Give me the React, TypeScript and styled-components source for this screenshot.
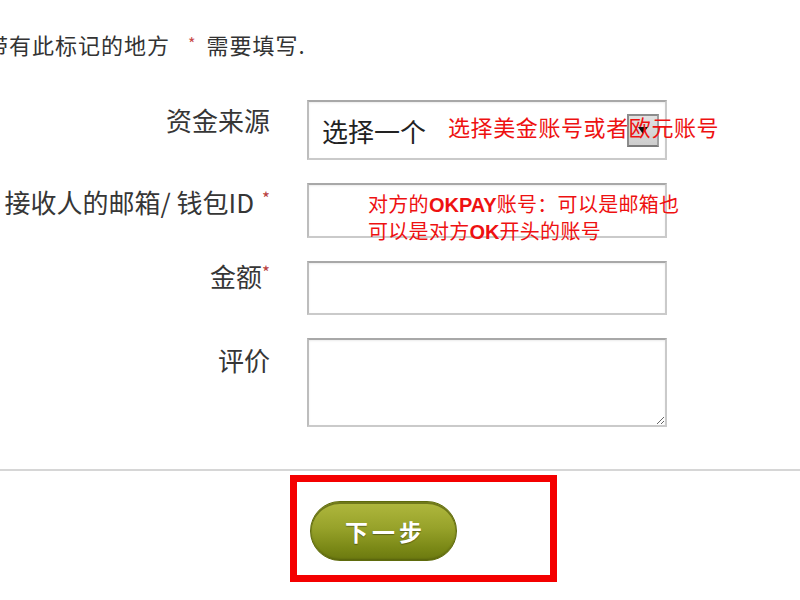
import React from 'react'
import styled, { createGlobalStyle } from 'styled-components'

const GlobalStyle = createGlobalStyle`
  html, body {
    margin: 0;
    padding: 0;
    background: #ffffff;
  }
  body {
    font-family: "Noto Sans CJK SC", "Noto Sans", sans-serif;
    color: #3a3a3a;
    overflow: hidden;
  }
`

const Page = styled.div`
  width: 800px;
  height: 600px;
  overflow: hidden;
`

const Notice = styled.div`
  padding-top: 28px;
  margin-left: -14px;
  height: 100px;
  box-sizing: border-box;
  font-size: 22px;
  letter-spacing: 1px;
  line-height: 30px;
  color: #333333;
  white-space: nowrap;
`

const NoticeStar = styled.span`
  display: inline-block;
  color: #c84a4a;
  font-size: 16px;
  vertical-align: 4px;
  margin: 0 10px 0 18px;
`

const Form = styled.div`
  display: grid;
  grid-template-columns: 270px 360px;
  grid-auto-rows: auto;
  column-gap: 37px;
  row-gap: 23px;
`

const Label = styled.div<{ $top: number }>`
  display: flex;
  justify-content: flex-end;
  align-items: flex-start;
  padding-top: ${(p) => p.$top}px;
  font-size: 26px;
  line-height: 30px;
  color: #363636;
  white-space: nowrap;
  min-width: 0;
`

const LabelStar = styled.span<{ $gap: number }>`
  color: #b84040;
  font-size: 17px;
  line-height: 17px;
  margin-left: ${(p) => p.$gap}px;
  margin-top: 2px;
`

const Field = styled.div`
  position: relative;
`

const boxBorder = `
  border: 2px solid #cacaca;
  border-top-color: #a8a8a8;
  border-left-color: #bdbdbd;
  box-shadow: inset 0 1px 2px rgba(0, 0, 0, 0.08);
  box-sizing: border-box;
  background: #ffffff;
`

const SelectBox = styled.div`
  ${boxBorder}
  height: 60px;
  display: flex;
  align-items: center;
  justify-content: space-between;
  padding: 0 6px 0 13px;
  font-size: 26px;
  color: #222222;
`

const DropButton = styled.span`
  width: 32px;
  height: 33px;
  box-sizing: border-box;
  border: 2px solid #8c8c8c;
  border-right-color: #a0a0a0;
  border-bottom-color: #7a7a7a;
  background: linear-gradient(#e2e2e2, #cdcdcd);
  display: flex;
  align-items: center;
  justify-content: center;
`

const TextInput = styled.input<{ $h: number }>`
  ${boxBorder}
  display: block;
  width: 100%;
  height: ${(p) => p.$h}px;
  margin: 0;
  outline: none;
`

const TextArea = styled.textarea`
  ${boxBorder}
  display: block;
  width: 100%;
  height: 89px;
  margin: 0;
  outline: none;
  resize: both;
`

const Annotation = styled.div<{ $left: number; $top: number; $size: number; $lh: number; $ls: number }>`
  position: absolute;
  left: ${(p) => p.$left}px;
  top: ${(p) => p.$top}px;
  font-size: ${(p) => p.$size}px;
  line-height: ${(p) => p.$lh}px;
  letter-spacing: ${(p) => p.$ls}px;
  color: #ee1111;
  white-space: nowrap;
  pointer-events: none;

  b {
    font-family: "Liberation Sans", Arial, sans-serif;
    font-weight: 700;
    letter-spacing: 0;
  }
`

const Divider = styled.div`
  margin-top: 42px;
  height: 2px;
  background: #d6d6d6;
`

const ActionArea = styled.div`
  margin: 4px 0 0 290px;
  width: 267px;
  height: 107px;
  box-sizing: border-box;
  border: 7px solid #f40000;
  padding: 19px 0 0 13px;
`

const NextButton = styled.button`
  width: 147px;
  height: 60px;
  border-radius: 30px;
  border: 1px solid #5f6b0c;
  background: linear-gradient(#b0b83e 0%, #97a22a 45%, #7a8816 80%, #6b7910 100%);
  box-shadow: inset 0 2px 0 rgba(60, 70, 0, 0.55), inset 0 -1px 2px rgba(0, 0, 0, 0.2);
  color: #ffffff;
  font-family: "Noto Sans CJK SC", sans-serif;
  font-size: 23px;
  font-weight: 700;
  letter-spacing: 4px;
  padding: 0 0 0 4px;
  text-shadow: 0 1px 1px rgba(0, 0, 0, 0.35);
  cursor: pointer;
`

export default function App() {
  return (
    <Page>
      <GlobalStyle />
      <Notice>
        带有此标记的地方<NoticeStar>*</NoticeStar>需要填写.
      </Notice>
      <Form>
        <Label $top={5}>资金来源</Label>
        <Field>
          <SelectBox>
            <span>选择一个</span>
            <DropButton>
              <svg width="10" height="7" viewBox="0 0 10 7">
                <path d="M0 0 H10 L5 7 Z" fill="#111" />
              </svg>
            </DropButton>
          </SelectBox>
          <Annotation $left={141} $top={13} $size={22} $lh={26} $ls={0.6}>
            选择美金账号或者欧元账号
          </Annotation>
        </Field>

        <Label $top={4}>
          接收人的邮箱/ 钱包ID<LabelStar $gap={8}>*</LabelStar>
        </Label>
        <Field>
          <TextInput $h={55} type="text" />
          <Annotation $left={61} $top={8} $size={20} $lh={25} $ls={0.3}>
            对方的<b>OKPAY</b>账号：可以是邮箱也
            <br />
            可以是对方<b>OK</b>开头的账号
          </Annotation>
        </Field>

        <Label $top={0}>
          金额<LabelStar $gap={0}>*</LabelStar>
        </Label>
        <Field>
          <TextInput $h={54} type="text" />
        </Field>

        <Label $top={7}>评价</Label>
        <Field>
          <TextArea />
        </Field>
      </Form>
      <Divider />
      <ActionArea>
        <NextButton type="button">下一步</NextButton>
      </ActionArea>
    </Page>
  )
}
